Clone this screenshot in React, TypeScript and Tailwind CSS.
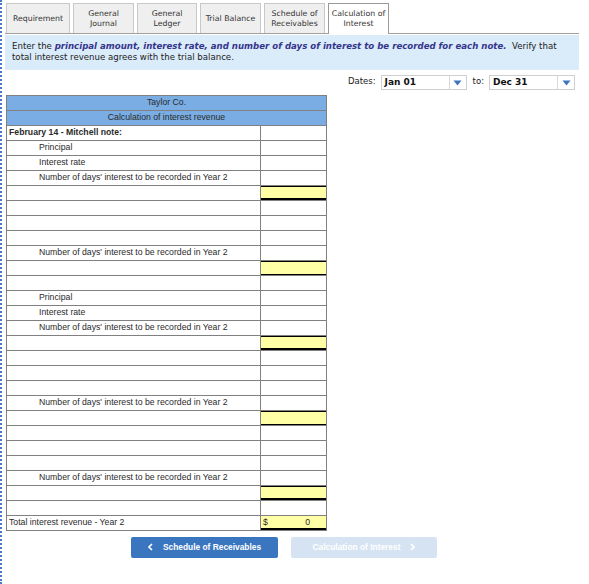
import React from "react";

const tabs = [
  { label: ["Requirement"], w: "w-[64px]" },
  { label: ["General", "Journal"], w: "w-[61px]" },
  { label: ["General", "Ledger"], w: "w-[60px]" },
  { label: ["Trial Balance"], w: "w-[61px]" },
  { label: ["Schedule of", "Receivables"], w: "w-[61px]" },
];

type Row = {
  text?: string;
  indent?: boolean;
  bold?: boolean;
  cell?: "yellow" | "yellowTotal" | "yellowThin";
};

const noteRows = (withPrincipal: boolean): Row[] =>
  withPrincipal
    ? [
        { text: "Principal", indent: true },
        { text: "Interest rate", indent: true },
        { text: "Number of days' interest to be recorded in Year 2", indent: true },
        { cell: "yellowTotal" },
      ]
    : [
        { text: "Number of days' interest to be recorded in Year 2", indent: true },
        { cell: "yellowThin" },
      ];

const rows: Row[] = [
  { text: "February 14 - Mitchell note:", bold: true },
  ...noteRows(true),
  {},
  {},
  {},
  ...noteRows(false),
  {},
  ...noteRows(true),
  {},
  {},
  {},
  ...noteRows(false),
  {},
  {},
  {},
  { text: "Number of days' interest to be recorded in Year 2", indent: true },
  { cell: "yellowTotal" },
  {},
];

const cellClass = (cell?: Row["cell"]) => {
  if (cell === "yellowTotal")
    return "bg-[#ffffa6] shadow-[inset_0_1px_0_#000,inset_0_-2px_0_#000]";
  if (cell === "yellowThin")
    return "bg-[#ffffa6] shadow-[inset_0_1px_0_#000,inset_0_-1px_0_#000]";
  return "bg-white";
};

const Arrow = () => (
  <svg width="9" height="6" viewBox="0 0 9 6">
    <path d="M0.5 0.5 L8.5 0.5 L4.5 5.5 Z" fill="#3f74bf" />
  </svg>
);

const Chevron = ({ dir }: { dir: "left" | "right" }) => (
  <svg width="5" height="8" viewBox="0 0 5 8">
    <path
      d={dir === "left" ? "M4 1 L1 4 L4 7" : "M1 1 L4 4 L1 7"}
      fill="none"
      stroke="#fff"
      strokeWidth="1.6"
    />
  </svg>
);

const DateSelect = ({ value }: { value: string }) => (
  <div className="flex h-[15px] w-[86px] items-center border border-[#cfcfcf] bg-white">
    <span className="flex-1 pl-[3px] text-[9px] font-bold text-[#111]">{value}</span>
    <div className="flex h-full w-[17px] items-center justify-center border-l border-[#dadada]">
      <Arrow />
    </div>
  </div>
);

export default function App() {
  return (
    <div
      className="h-[584px] w-[589px] border-l-2 border-dotted border-[#4a78c6] bg-white text-[#222]"
      style={{ fontFamily: '"DejaVu Sans", Verdana, sans-serif' }}
    >
      {/* tabs */}
      <div className="ml-[3px] mr-[10px] flex items-end gap-[3px] border-b border-[#a0a0a0] pt-[3px] pl-[1px]">
        {tabs.map((t) => (
          <div
            key={t.label.join()}
            className={`${t.w} flex h-[30px] flex-col items-center justify-center border border-b-0 border-[#c8c8c8] bg-[#efefef] text-[7.8px] leading-[10px] text-[#333]`}
          >
            {t.label.map((l) => (
              <span key={l}>{l}</span>
            ))}
          </div>
        ))}
        <div className="-mb-px flex h-[31px] w-[61px] flex-col items-center justify-center border border-b-0 border-[#9a9a9a] bg-white text-[7.8px] leading-[10px] text-[#333]">
          <span>Calculation of</span>
          <span>Interest</span>
        </div>
      </div>

      {/* instructions */}
      <div className="ml-[3px] mr-[10px] mt-px h-[35px] bg-[#daebfa] px-[7px] pt-[6px] text-[8.6px] leading-[11px] text-[#222]">
        Enter the{" "}
        <span className="font-bold italic text-[#35358c]">
          principal amount, interest rate, and number of days of interest to be recorded for each note.
        </span>
        {"\u00a0 "}
        Verify that total interest revenue agrees with the trial balance.
      </div>

      {/* dates */}
      <div className="mr-[14px] mt-[5px] flex items-center justify-end gap-[5px] text-[8.5px] text-[#222]">
        <span className="mb-[3px]">Dates:</span>
        <DateSelect value="Jan 01" />
        <span className="mb-[3px] ml-[1px]">to:</span>
        <DateSelect value="Dec 31" />
      </div>

      {/* table */}
      <div
        className="ml-[4px] mt-[4px] w-[321px] border-t border-l border-[#808080] text-[8.7px] text-[#2a2a2a]"
        style={{ fontFamily: '"Liberation Sans", Arial, sans-serif' }}
      >
        <div className="flex h-[15px] items-center justify-center border-r border-b border-[#808080] bg-[#79ade4]">
          Taylor Co.
        </div>
        <div className="flex h-[15px] items-center justify-center border-r border-b border-[#808080] bg-[#79ade4]">
          Calculation of interest revenue
        </div>
        {rows.map((r, i) => (
          <div key={i} className="flex h-[15px] border-b border-[#808080]">
            <div
              className={`flex flex-1 items-center border-r border-[#808080] ${
                r.indent ? "pl-[32px]" : "pl-[2px]"
              } ${r.bold ? "font-bold" : ""}`}
            >
              {r.text}
            </div>
            <div className={`w-[66px] border-r border-[#808080] ${cellClass(r.cell)}`} />
          </div>
        ))}
        <div className="flex h-[15px] border-b border-[#808080]">
          <div className="flex flex-1 items-center border-r border-[#808080] pl-[2px]">
            Total interest revenue - Year 2
          </div>
          <div className="flex w-[66px] items-center justify-between border-r border-[#808080] bg-[#ffffa6] pl-[2px] pr-[16px] shadow-[inset_0_-2px_0_#000]">
            <span>$</span>
            <span>0</span>
          </div>
        </div>
      </div>

      {/* nav buttons */}
      <div
        className="ml-[129px] mt-[6px] flex gap-[13px] text-[8.4px] font-bold text-white"
        style={{ fontFamily: '"Liberation Sans", Arial, sans-serif' }}
      >
        <div className="flex h-[21px] w-[147px] items-center justify-center gap-[10px] rounded-[2px] bg-[#3a76bf]">
          <Chevron dir="left" />
          <span>Schedule of Receivables</span>
        </div>
        <div className="flex h-[21px] w-[146px] items-center justify-center gap-[10px] rounded-[2px] bg-[#d6e3f2]">
          <span>Calculation of Interest</span>
          <Chevron dir="right" />
        </div>
      </div>
    </div>
  );
}
